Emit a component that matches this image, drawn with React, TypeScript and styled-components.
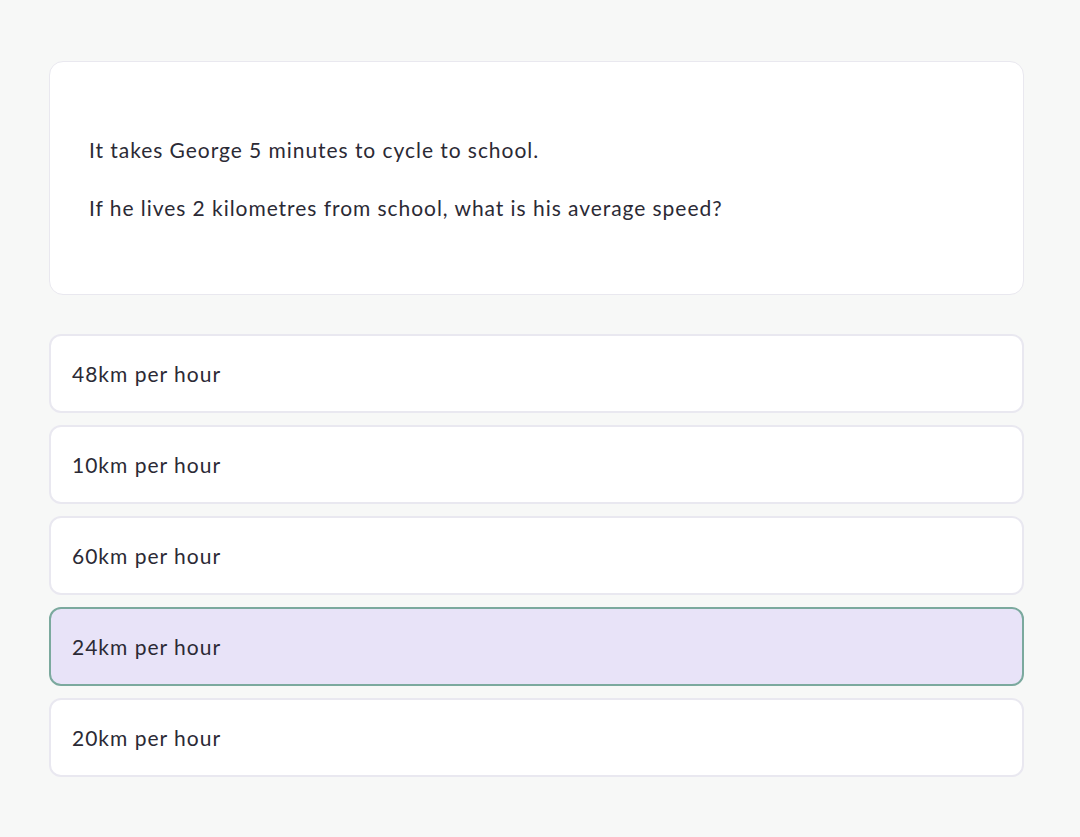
import React from "react";
import styled, { createGlobalStyle } from "styled-components";

const Global = createGlobalStyle`
  html, body { margin: 0; padding: 0; background: #f7f8f7; }
  body { font-family: "Lato", "Open Sans", sans-serif; color: #2b2a35; }
`;

const Page = styled.div`
  padding: 61px 56px 60px 49px;
  display: flex;
  flex-direction: column;
  gap: 39px;
`;

const QuestionCard = styled.div`
  background: #ffffff;
  border: 1px solid #e9e8ef;
  border-radius: 14px;
  padding: 74px 39px 72px;
  display: flex;
  flex-direction: column;
  gap: 30px;
`;

const QuestionText = styled.p`
  margin: 0;
  font-size: 21px;
  line-height: 28px;
  letter-spacing: 0.95px;
  color: #2b2a35;
`;

const Options = styled.div`
  display: flex;
  flex-direction: column;
  gap: 12px;
`;

const Option = styled.button<{ $selected?: boolean }>`
  all: unset;
  box-sizing: border-box;
  height: 79px;
  display: flex;
  align-items: center;
  padding: 0 21px;
  border-radius: 12px;
  border: 2px solid ${(p) => (p.$selected ? "#7ba99e" : "#e9e8f0")};
  background: ${(p) => (p.$selected ? "#e8e3f8" : "#ffffff")};
  font-family: "Lato", "Open Sans", sans-serif;
  font-size: 21px;
  letter-spacing: 1px;
  color: #2b2a35;
  cursor: pointer;
`;

const answers = ["48km per hour", "10km per hour", "60km per hour", "24km per hour", "20km per hour"];

export default function App() {
  return (
    <>
      <Global />
      <Page>
        <QuestionCard>
          <QuestionText>It takes George 5 minutes to cycle to school.</QuestionText>
          <QuestionText>If he lives 2 kilometres from school, what is his average speed?</QuestionText>
        </QuestionCard>
        <Options>
          {answers.map((a, i) => (
            <Option key={a} $selected={i === 3}>{a}</Option>
          ))}
        </Options>
      </Page>
    </>
  );
}
